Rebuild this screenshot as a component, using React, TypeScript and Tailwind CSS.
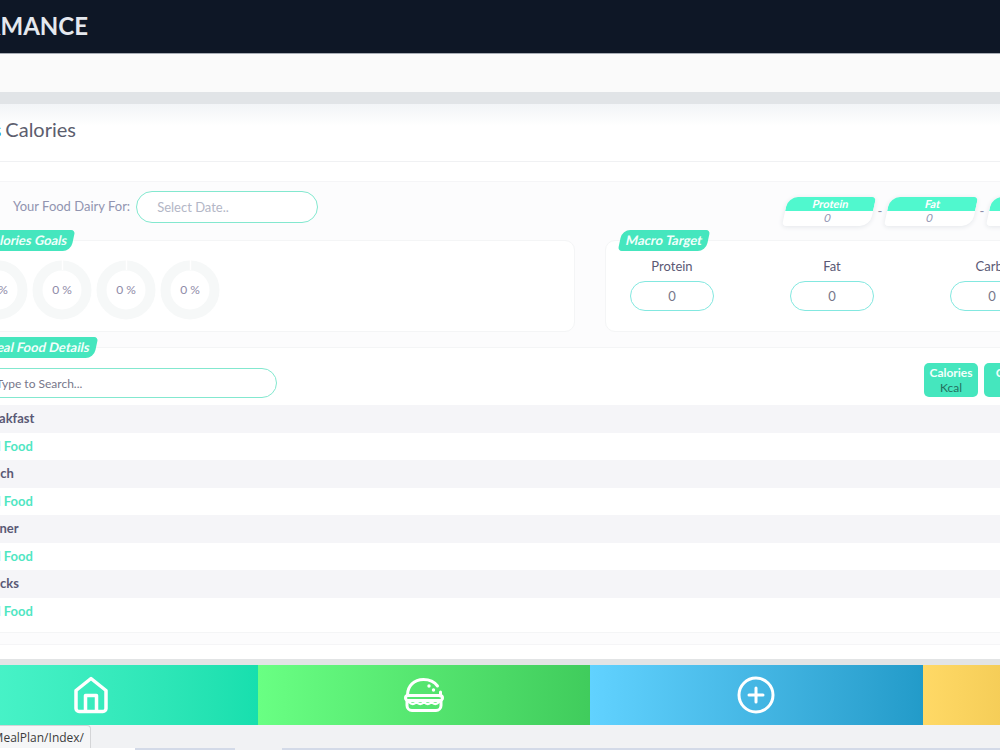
import React from 'react';
import { clsx } from 'clsx';

type Meal = {
  id: string;
  title: string;
};

const meals: Meal[] = [
  { id: 'breakfast', title: 'Breakfast' },
  { id: 'lunch', title: 'Lunch' },
  { id: 'dinner', title: 'Dinner' },
  { id: 'snacks', title: 'Snacks' },
];

const macros = ['Protein', 'Fat', 'Carbs', 'Calories'];
const columns = [
  { name: 'Calories', unit: 'Kcal' },
  { name: 'Carbs', unit: 'g' },
  { name: 'Fat', unit: 'g' },
  { name: 'Protein', unit: 'g' },
  { name: 'Sugar', unit: 'g' },
];

const Tag = ({ children, className }: { children: React.ReactNode; className: string }) => (
  <h2
    className={clsx(
      'absolute -top-[11px] h-[21px] -skew-x-12 rounded-[4px] rounded-tl-lg rounded-br-lg bg-[#45e6be] px-[6px] text-[13px] leading-[21px] font-bold whitespace-nowrap text-[#f2fffb]',
      className,
    )}
  >
    {children}
  </h2>
);

const Ring = () => (
  <div className="relative grid size-[60px] place-items-center">
    <svg viewBox="0 0 60 60" className="absolute inset-0 size-full" fill="none">
      <circle cx="30" cy="30" r="24.5" stroke="#f6f8f8" strokeWidth="10" />
      <path d="M30.5 0v10" stroke="#fff" strokeWidth="1.5" />
    </svg>
    <span className="relative text-[12px] text-[#8f8ba8]">0 %</span>
  </div>
);

const Pill = ({ name }: { name: string }) => (
  <div className="h-[29px] w-[88px] -skew-x-12 overflow-hidden rounded-[4px] rounded-tl-[10px] rounded-br-[10px] bg-white text-center text-[11px] leading-[14px] shadow-[0_1px_5px_#e3e6ea]">
    <div className="bg-[#50f8ce] font-bold text-white">{name}</div>
    <div className="text-[#9496b4]">0</div>
  </div>
);

const HomeIcon = () => (
  <svg viewBox="0 0 36 38" className="h-[38px] w-9" fill="none" stroke="#fff" strokeWidth="3.5" strokeLinejoin="round">
    <path d="M18 2.500 3 14.500v18a3 3 0 0 0 3 3h24a3 3 0 0 0 3-3v-18Z" />
    <path d="M12.500 35.500v-16h11v16" />
  </svg>
);

const BurgerIcon = () => (
  <svg viewBox="0 0 40 36" className="h-9 w-10" fill="none" stroke="#fff" strokeWidth="3" strokeLinecap="round" strokeLinejoin="round">
    <path d="M3.5 18C3.5 9 10 2.5 19.5 2.5c6.500 0 11 2.500 14 6.500" />
    <path d="M36.500 15v4" />
    <path d="M4 18.500h32a2.500 2.500 0 0 1 0 5H4a2.500 2.500 0 0 1 0-5Z" />
    <path d="M3 24v4.500a5 5 0 0 0 5 5h24a5 5 0 0 0 5-5V24" />
    <path d="M5 25q3.800 4 7.500 0 3.700 4 7.500 0 3.700 4 7.500 0 3.800 4 7.500 0" strokeWidth="2.500" />
    <circle cx="25" cy="9" r="1.700" fill="#fff" stroke="none" />
    <circle cx="29.500" cy="13" r="1.700" fill="#fff" stroke="none" />
  </svg>
);

const PlusIcon = () => (
  <svg viewBox="0 0 38 38" className="size-[38px]" fill="none" stroke="#fff" strokeWidth="3" strokeLinecap="round">
    <circle cx="19" cy="19" r="17" />
    <path d="M19 12v14M12 19h14" />
  </svg>
);

const navItems = [
  { label: 'Home', color: 'from-[#50f8ce] to-[#17dfae]', icon: <HomeIcon /> },
  { label: 'Meal plan', color: 'from-[#69ff83] to-[#40cc5c]', icon: <BurgerIcon /> },
  { label: 'Add', color: 'from-[#61d2ff] to-[#229bc9]', icon: <PlusIcon /> },
  { label: 'More', color: 'from-[#ffd966] to-[#d6a81f]', icon: null },
];

export default function App() {
  return (
    <div className="min-h-screen overflow-hidden bg-[#f1f2f4] font-[Lato,'Open_Sans',sans-serif] text-[13px] text-[#5a5975]">
      <div className="-ml-[7.5%] w-[133%]">
        <header className="h-[54px] border-b border-[#a8adb5] bg-[#0e1726]">
          <div className="flex w-[163px] justify-end text-2xl leading-[52px] font-bold text-[#e4e8ee]">
            PERFORMANCE
          </div>
        </header>
        <div className="h-[38px] bg-[#fafafa]" />
        <div className="h-3 bg-[#e1e4e7]" />

        <main className="bg-white bg-[linear-gradient(to_bottom,#f2f4f7,#fff_22px)] pb-[14px]">
          <h1 className="flex h-[57px] w-[151px] items-center justify-end gap-1 pb-2 text-xl whitespace-nowrap text-[#5c5e6e]">
            <span className="text-[#1b8fc4]">Goals</span>
            <span>Calories</span>
          </h1>
          <div className="border-t border-[#f0f1f3]" />

          <div className="mt-[19px] border-y border-[#f5f5f7] bg-[#fcfcfd] px-[27px] pb-[11px]">
            <div className="flex items-start justify-between pt-[9px] pr-[49px] pl-[61px]">
              <div className="flex items-center gap-[6px]">
                <label htmlFor="date" className="text-[#9194b0]">Your Food Dairy For:</label>
                <input
                  id="date"
                  placeholder="Select Date.."
                  className="h-8 w-[182px] rounded-full border border-[#83e8cf] bg-white px-5 outline-none placeholder:text-[#b3b6c6]"
                />
              </div>
              <div className="flex items-center gap-1 pt-[6px]">
                {macros.map((name, i) => (
                  <React.Fragment key={name}>
                    {i > 0 && <span className="w-[6px] text-center text-[#8d90ac]">-</span>}
                    <Pill name={name} />
                  </React.Fragment>
                ))}
              </div>
            </div>

            <div className="mt-[14px] grid grid-cols-2 gap-[30px]">
              <section className="relative rounded-[10px] border border-[#f4f5f6] bg-white px-[15px]">
                <Tag className="left-[26px]">Calories Goals</Tag>
                <div className="flex gap-1 pt-[19px]">
                  {[0, 1, 2, 3].map(n => <Ring key={n} />)}
                </div>
              </section>
              <section className="relative flex gap-[76px] rounded-[10px] border border-[#f4f5f6] bg-white pt-4 pb-5 pl-6">
                <Tag className="left-[14px]">Macro Target</Tag>
                {macros.map(name => (
                  <div key={name} className="flex flex-col items-center gap-[6px]">
                    <label htmlFor={`target-${name}`} className="leading-[18px]">{name}</label>
                    <input
                      id={`target-${name}`}
                      defaultValue="0"
                      className="h-[30px] w-[84px] rounded-full border border-[#83e8e0] bg-white text-center text-[#77778a] outline-none"
                    />
                  </div>
                ))}
              </section>
            </div>

            <section className="relative mt-[15px] border border-[#f4f5f6] bg-white pb-[7px]">
              <Tag className="left-[26px]">Meal Food Details</Tag>
              <div className="flex items-start justify-between pt-[15px] pr-[9px] pb-[7px] pl-7">
                <input
                  aria-label="Search food"
                  placeholder="Type to Search..."
                  className="mt-[5px] h-[30px] w-[296px] rounded-full border border-[#83e8cf] bg-white px-[14px] text-[12px] outline-none placeholder:text-[#77778a]"
                />
                <div className="flex gap-[6px]">
                  {columns.map(col => (
                    <div key={col.name} className="w-[54px] rounded-[5px] bg-[#45e6be] py-[2px] text-center text-[12px] leading-[15px]">
                      <div className="font-bold text-[#f2fffb]">{col.name}</div>
                      <div className="text-[#24705f]">{col.unit}</div>
                    </div>
                  ))}
                </div>
              </div>
              {meals.map(meal => (
                <div key={meal.id} className="font-bold">
                  <h3 className="h-7 bg-[#f5f5f8] px-[26px] leading-[26px]">{meal.title}</h3>
                  <a href={`#${meal.id}`} className="block h-[27px] px-6 leading-[27px] text-[#50e6c2]">Add Food</a>
                </div>
              ))}
            </section>
          </div>
        </main>

        <div className="h-[6px] bg-[#e2e4e5]" />
        <nav className="grid grid-cols-4">
          {navItems.map(item => (
            <a
              key={item.label}
              href="#"
              aria-label={item.label}
              className={clsx('flex h-[60px] items-center justify-center bg-linear-to-r', item.color)}
            >
              {item.icon}
            </a>
          ))}
        </nav>
      </div>

      <footer className="flex h-[25px] flex-col justify-between">
        <div className="flex h-[23px] w-[91px] justify-end rounded-tr-[4px] border-t border-r border-[#d4d5d7] bg-[#f5f6f7] pr-[6px] font-['Open_Sans',sans-serif] text-[12px] leading-6 text-[#3c3c3c]">
          /MealPlan/Index/
        </div>
        <div className="flex h-[2px]">
          <div className="w-[13.5%] bg-white" />
          <div className="w-[10%] bg-[#d3dae8]" />
          <div className="w-[4.7%]" />
          <div className="grow bg-[#d3dae8]" />
        </div>
      </footer>
    </div>
  );
}
